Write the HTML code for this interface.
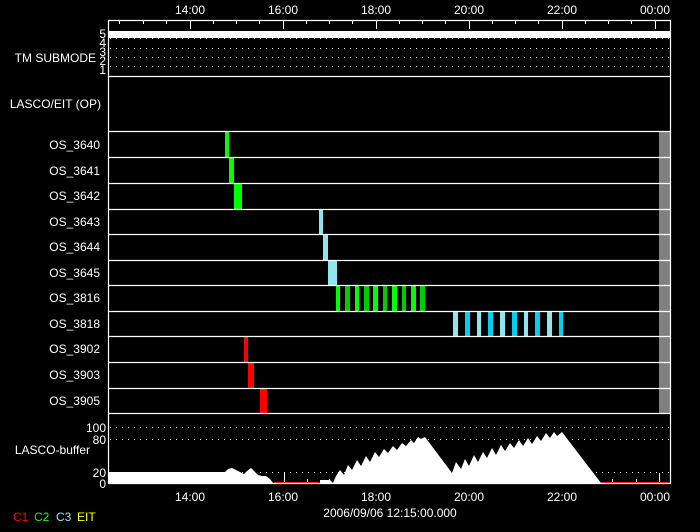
<!DOCTYPE html>
<html><head><meta charset="utf-8"><style>
html,body{margin:0;padding:0;background:#000;width:700px;height:532px;overflow:hidden}
svg{display:block}
text{font-family:"Liberation Sans",sans-serif;font-size:12px;fill:#fff}
</style></head><body>
<svg width="700" height="532" viewBox="0 0 700 532">
<rect width="700" height="532" fill="#000"/>
<g text-anchor="middle">
<text x="190" y="14">14:00</text><text x="283" y="14">16:00</text><text x="376" y="14">18:00</text>
<text x="469" y="14">20:00</text><text x="562" y="14">22:00</text><text x="655" y="14">00:00</text>
<text x="190" y="501">14:00</text><text x="283" y="501">16:00</text><text x="376" y="501">18:00</text>
<text x="469" y="501">20:00</text><text x="562" y="501">22:00</text><text x="655" y="501">00:00</text>
<text x="390" y="517">2006/09/06 12:15:00.000</text>
</g>
<g stroke="#fff" stroke-width="1">
<path d="M119.5 20v4M143.5 20v4M166.5 20v4M213.5 20v4M236.5 20v4M259.5 20v4M306.5 20v4M329.5 20v4M352.5 20v4M399.5 20v4M422.5 20v4M445.5 20v4M492.5 20v4M515.5 20v4M538.5 20v4M585.5 20v4M608.5 20v4M631.5 20v4"/>
<path d="M190.5 20v9M283.5 20v9M376.5 20v9M469.5 20v9M562.5 20v9M655.5 20v9"/>
</g>
<rect x="108" y="31" width="563" height="7" fill="#fff"/>
<g stroke="#fff" stroke-dasharray="1 5">
<path d="M110 38.5H671M110 48.5H671M110 57.5H671M110 66.5H671"/>
<path d="M110 427.5H671M110 439.5H671M110 472.5H671"/>
</g>
<g fill="#00ff00">
<rect x="225" y="132" width="4" height="26"/><rect x="229" y="158" width="5" height="25"/><rect x="234" y="183" width="8" height="26"/>
</g>
<g fill="#90e4ee">
<rect x="319" y="209" width="4" height="25"/><rect x="323" y="234" width="5" height="26"/><rect x="328" y="260" width="9" height="25"/>
</g>
<g>
<rect x="336" y="285" width="4" height="26" fill="#00ff00"/><rect x="345" y="285" width="5" height="26" fill="#00cc00"/>
<rect x="355" y="285" width="4" height="26" fill="#00ff00"/><rect x="364" y="285" width="5" height="26" fill="#00cc00"/>
<rect x="373" y="285" width="5" height="26" fill="#00ff00"/><rect x="383" y="285" width="4" height="26" fill="#00cc00"/>
<rect x="392" y="285" width="5" height="26" fill="#00ff00"/><rect x="402" y="285" width="4" height="26" fill="#00cc00"/>
<rect x="411" y="285" width="5" height="26" fill="#00ff00"/><rect x="420" y="285" width="5" height="26" fill="#00cc00"/>
</g>
<g>
<rect x="453" y="311" width="5" height="25" fill="#90e4ee"/><rect x="465" y="311" width="5" height="25" fill="#00d0f0"/>
<rect x="477" y="311" width="4" height="25" fill="#90e4ee"/><rect x="488" y="311" width="5" height="25" fill="#00d0f0"/>
<rect x="500" y="311" width="5" height="25" fill="#90e4ee"/><rect x="512" y="311" width="5" height="25" fill="#00d0f0"/>
<rect x="524" y="311" width="4" height="25" fill="#90e4ee"/><rect x="535" y="311" width="5" height="25" fill="#00d0f0"/>
<rect x="547" y="311" width="5" height="25" fill="#90e4ee"/><rect x="559" y="311" width="4" height="25" fill="#00d0f0"/>
</g>
<g fill="#ff0000">
<rect x="244" y="336" width="4" height="26"/><rect x="248" y="362" width="6" height="26"/><rect x="260" y="388" width="7" height="25"/>
</g>
<rect x="659" y="132" width="12" height="281" fill="#808080"/>
<polygon fill="#fff" points="108,483 108,472 225,472 228,469 232,468 236,470 240,472 244,474 247,471 251,468 255,472 258,475 262,476 266,476 270,479 273,483 320,483 320,480 330,480 333,483 336,476 340,470 344,475 348,465 352,470 357,460 361,466 366,456 370,462 375,452 379,457 384,449 388,453 393,446 397,450 402,443 406,446 411,440 414,443 418,437 421,439 425,437 452,473 456,462 461,469 465,459 469,466 474,455 478,462 483,452 487,458 492,448 496,455 501,445 505,451 510,443 514,448 519,440 523,446 528,438 532,444 537,436 541,441 546,433 550,438 554,432 557,436 562,432 601,483"/>
<g fill="#fff">
<rect x="284" y="473" width="1" height="10"/><rect x="307" y="479" width="1" height="4"/><rect x="329" y="479" width="1" height="4"/>
<rect x="612" y="479" width="1" height="4"/><rect x="636" y="479" width="1" height="4"/><rect x="659" y="473" width="1" height="10"/>
</g>
<g stroke="#ff0000" stroke-width="1"><path d="M274 482.5H319M601 482.5H671"/></g>
<g stroke="#fff" stroke-width="1.2" fill="none">
<path d="M108.5 20.5H670.5V483.5H108.5Z"/>
<path d="M108 76.5H671M108 131.5H671M108 157.5H671M108 183.5H671M108 209.5H671M108 234.5H671M108 260.5H671M108 285.5H671M108 311.5H671M108 336.5H671M108 362.5H671M108 388.5H671M108 413.5H671"/>
</g>
<g text-anchor="end">
<text x="96" y="62">TM SUBMODE</text>
<text x="106" y="38" font-size="10">5</text><text x="106" y="47" font-size="10">4</text><text x="106" y="56" font-size="10">3</text><text x="106" y="65" font-size="10">2</text><text x="106" y="74" font-size="10">1</text>
<text x="101" y="108">LASCO/EIT (OP)</text>
<text x="100" y="149">OS_3640</text><text x="100" y="175">OS_3641</text><text x="100" y="200">OS_3642</text>
<text x="100" y="226">OS_3643</text><text x="100" y="251">OS_3644</text><text x="100" y="277">OS_3645</text>
<text x="100" y="302">OS_3816</text><text x="100" y="328">OS_3818</text><text x="100" y="353">OS_3902</text>
<text x="100" y="379">OS_3903</text><text x="100" y="405">OS_3905</text>
<text x="106" y="432">100</text><text x="106" y="444">80</text><text x="106" y="477">20</text><text x="106" y="488">0</text>
<text x="90" y="454">LASCO-buffer</text>
</g>
<text x="13" y="521" font-size="10" style="fill:#ff0000">C1</text>
<text x="34" y="521" font-size="10" style="fill:#00ff00">C2</text>
<text x="56" y="521" font-size="10" style="fill:#90e4ee">C3</text>
<text x="77" y="521" font-size="10" style="fill:#ffff00">EIT</text>
</svg>
</body></html>
